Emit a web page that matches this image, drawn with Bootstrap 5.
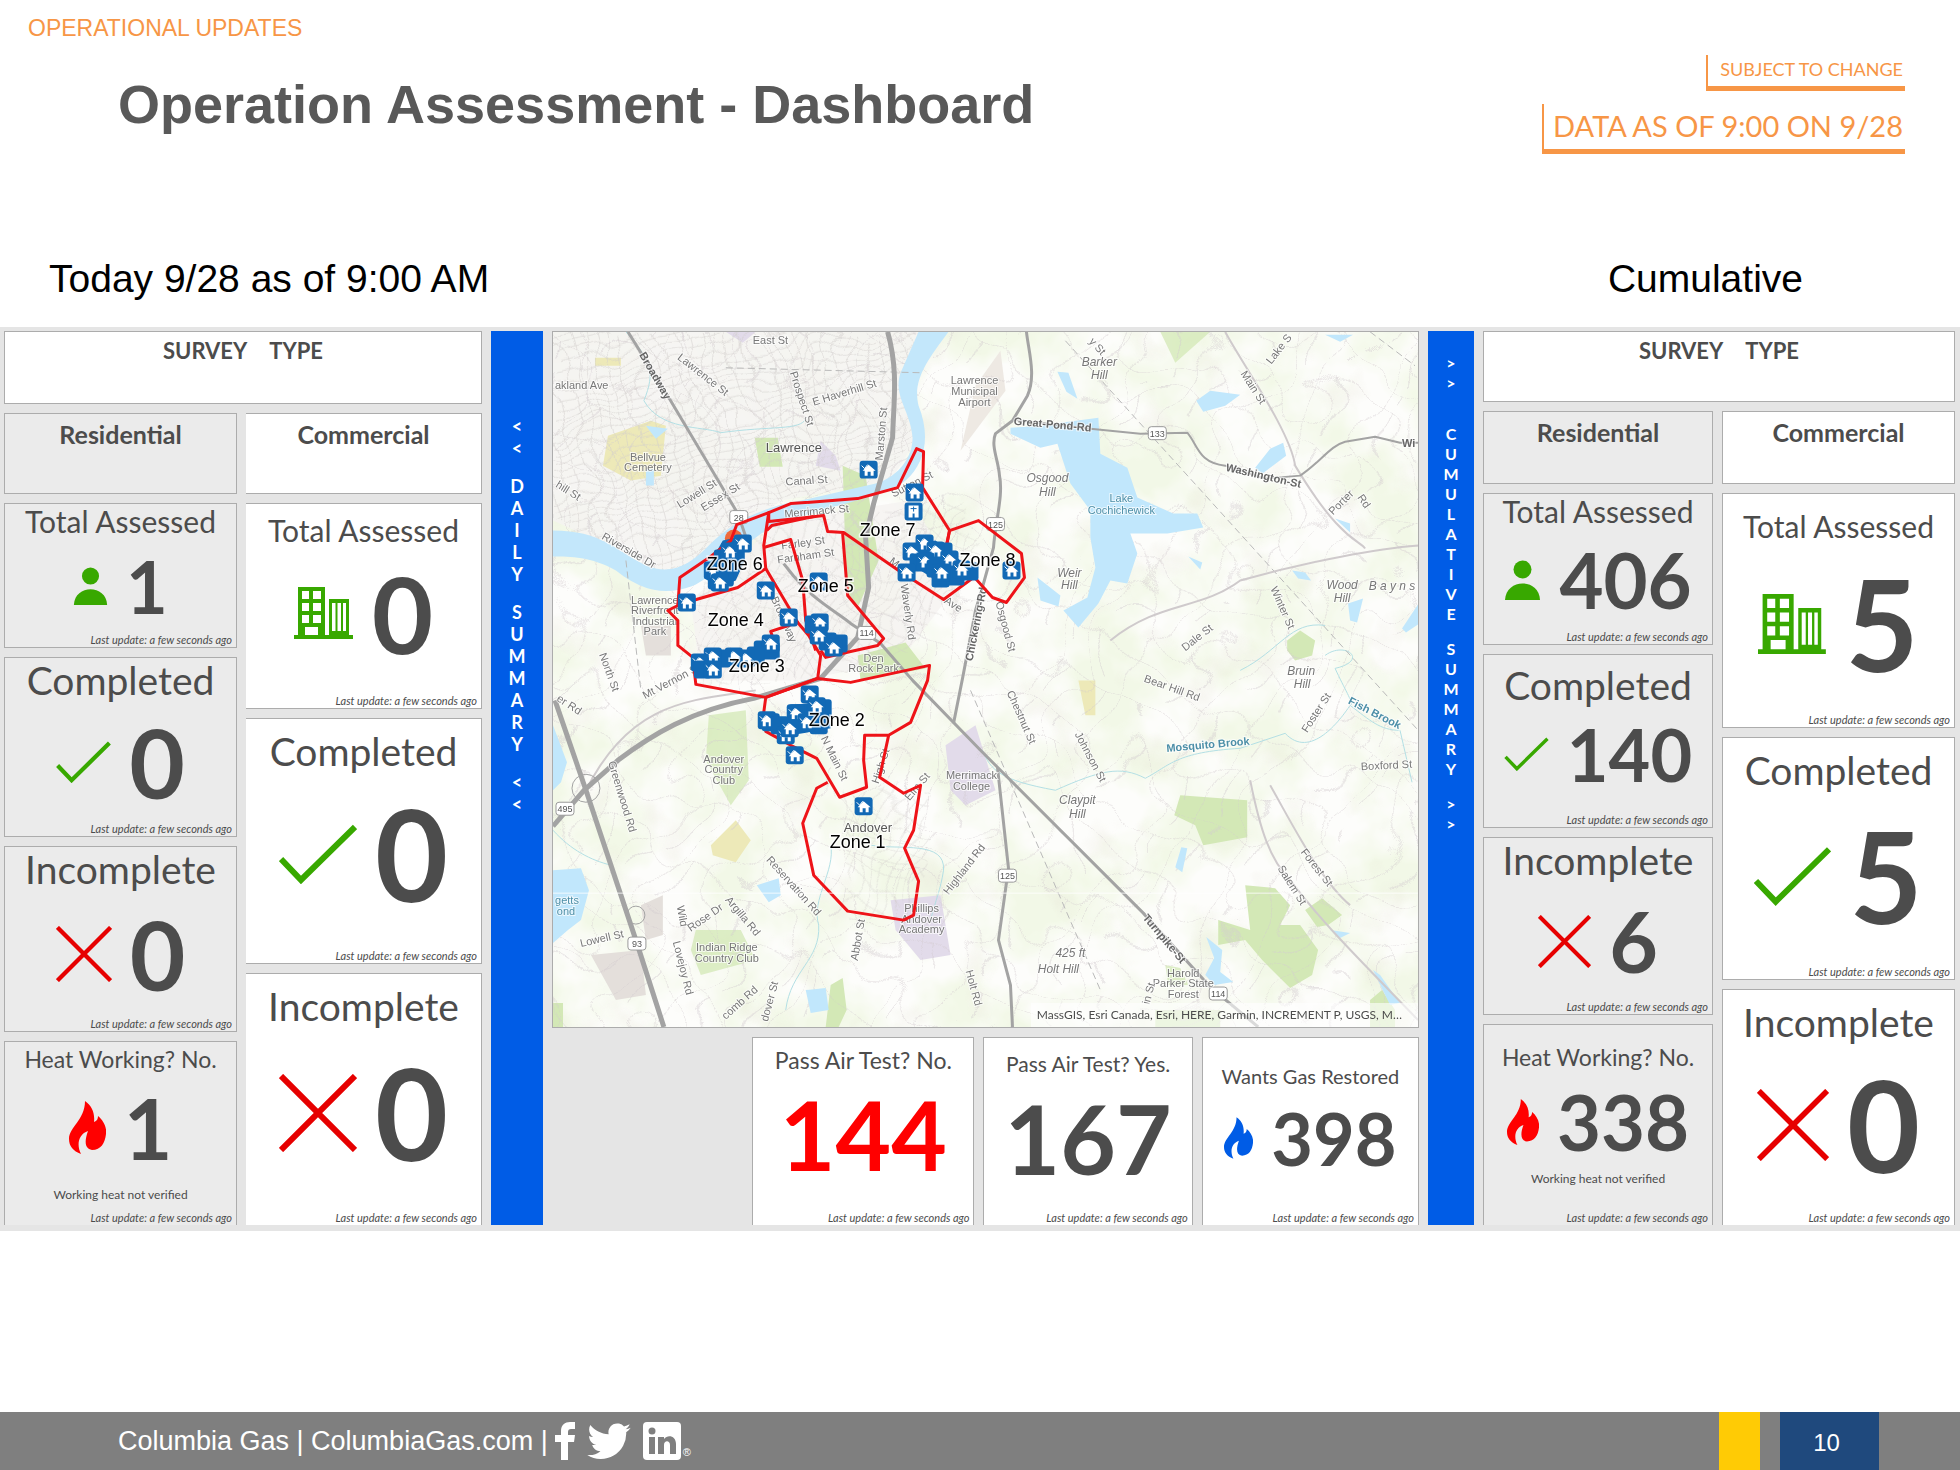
<!DOCTYPE html>
<html lang="en">
<head>
<meta charset="utf-8">
<meta name="viewport" content="width=device-width, initial-scale=1">
<title>Operation Assessment - Dashboard</title>
<link rel="stylesheet" href="https://cdn.jsdelivr.net/npm/bootstrap@5.3.0/dist/css/bootstrap.min.css">
<style>
  body { font-family: "Liberation Sans", Arial, sans-serif; color: #000; background: #fff; }
  .accent { color: #f79646; }
  .eyebrow { font-size: 23px; line-height: 32px; padding: 12px 0 0 28px; }
  .page-title { font-size: 54px; line-height: 64px; font-weight: 700; color: #595959; margin: 28px 0 0 118px; }
  .stamps { padding: 55px 55px 0 0; gap: 13px; font-family: Lato, sans-serif; }
  .stamp { border-left: 2px solid #f79646; border-bottom: 5px solid #f79646; padding-right: 2px; }
  .stamp-sm { font-size: 18px; line-height: 29px; padding-left: 12px; padding-bottom: 2px; }
  .stamp-lg { font-size: 29px; line-height: 43px; padding-left: 9px; padding-bottom: 2px; }
  .period-row { font-size: 39px; line-height: 48px; padding: 101px 157px 24px 49px; }

  .dash { font-family: Lato, sans-serif; color: #4c4c4c; background: #e5e5e5; min-height: 904px;
    padding: 4px 5px 6px 4px; display: grid; gap: 9px; grid-template-columns: 478fr 52fr 867fr 46fr 472fr; }
  .panel, .pair, .stack, .middle, .extras { display: grid; gap: 9px; min-width: 0; min-height: 0; }
  .panel-daily { grid-template-rows: 73fr 81fr 722fr; }
  .panel-total { grid-template-rows: 71fr 73fr 732fr; }
  .panel-daily .pair { grid-template-columns: 233fr 236fr; }
  .panel-total .pair { grid-template-columns: 230fr 233fr; }
  .panel-daily .stack-res { grid-template-rows: 145fr 180fr 185fr 184fr; }
  .panel-daily .stack-com { grid-template-rows: 206fr 247fr 252fr; }
  .panel-total .stack-res { grid-template-rows: 152fr 174fr 178fr 201fr; }
  .panel-total .stack-com { grid-template-rows: 235fr 243fr 236fr; }
  .middle { grid-template-rows: 696fr 188fr; }
  .extras { grid-template-columns: 191fr 222fr 209fr 217fr; }

  .tile { --bs-card-border-color: #acacac; --bs-card-bg: #fff; color: #4c4c4c; min-height: 0; }
  .tile-res { --bs-card-bg: #ebebeb; }
  .panel-daily .tile-com { border-left: 0; }
  .stack .tile:last-child, .extras .tile { border-bottom: 0; }
  .survey { font-size: 22px; line-height: 38px; font-weight: 700; gap: 22px; }
  .cap { text-align: center; white-space: nowrap; margin: 0; font-weight: 400; }
  .cap.kind { font-size: 25px; line-height: 40px; font-weight: 700; }
  .cap-20 { font-size: 20px; }
  .cap-21 { font-size: 21px; }
  .cap-23 { font-size: 23px; }
  .cap-30 { font-size: 30px; }
  .cap-39 { font-size: 39px; }
  .h-35 { line-height: 35px; }
  .h-44 { line-height: 44px; }
  .h-52 { line-height: 52px; }
  .h-64 { line-height: 64px; }
  .h-76 { line-height: 76px; }
  .figure-row { flex: 1 1 0; display: flex; align-items: center; justify-content: center; gap: 18px; min-height: 0; }
  .num { font-weight: 700; line-height: 60px; }
  .n-70 { font-size: 72px; }
  .n-76 { font-size: 76px; }
  .n-84 { font-size: 84px; }
  .n-96 { font-size: 96px; }
  .n-106 { font-size: 106px; }
  .n-126 { font-size: 126px; }
  .stale { font-size: 11px; line-height: 14px; font-style: italic; text-align: right; padding-right: 4px; white-space: nowrap; }
  .remark { font-size: 12px; line-height: 32px; text-align: center; }
  .go { color: #38a800; }
  .stop { color: #e60000; }
  .hot { color: #f00; }
  .gas { color: #005ce6; }

  .rail { background: #005ce6; color: #fff; font-weight: 700; text-align: center; }
  .rail-daily { font-size: 18px; line-height: 22px; padding-top: 84px; gap: 16px; }
  .rail-total { font-size: 16px; line-height: 20px; padding-top: 22px; gap: 15px; }
  .rail-total div:first-child { margin-bottom: 16px; }

  .map-box { position: relative; overflow: hidden; border: 1px solid #acacac; background: #fcfcf8; min-height: 0; }
  .map-box > svg { position: absolute; inset: 0; width: 100%; height: 100%; }
  .credit { position: absolute; right: 0; bottom: 0; padding: 0 16px 0 6px; font-size: 12px; line-height: 24px; background: rgba(255,255,255,.6); }
  .map-box text { font-family: "Liberation Sans", Arial, sans-serif; font-size: 11px; fill: #777; stroke: #fff; stroke-width: 2px; paint-order: stroke; stroke-opacity: .7; }
  .map-box .town { font-size: 13px; fill: #555; }
  .map-box .hill { font-style: italic; font-size: 12px; text-anchor: middle; }
  .map-box .spot { text-anchor: middle; }
  .map-box .wet { fill: #4d8fa8; text-anchor: middle; }
  .map-box .main { font-weight: 700; fill: #666; }
  .map-box .zone { font-size: 18px; fill: #000; stroke-width: 3px; stroke-opacity: .8; }
  .map-box .sign { font-size: 9px; text-anchor: middle; stroke: none; fill: #555; }

  .foot { background: #7f7f7f; color: #fff; height: 58px; }
  .foot-brand { font-size: 27px; padding-left: 118px; }
  .foot-brand a { color: inherit; text-decoration: none; }
  .foot-icons { gap: 12px; padding-left: 7px; }
  .reg { font-size: 11px; line-height: 12px; padding: 22px 0 0 2px; }
  .swatch { width: 41px; background: #ffcb05; margin-right: 20px; }
  .page-no { width: 99px; background: #1f497d; font-size: 24px; margin-right: 81px; padding: 3px 6px 0 0; }
</style>
<script src="https://cdn.jsdelivr.net/npm/bootstrap@5.3.0/dist/js/bootstrap.bundle.min.js"></script>
</head>
<body class="d-flex flex-column min-vh-100">

<svg width="0" height="0" class="position-absolute" aria-hidden="true">
  <symbol id="i-check" viewBox="0 0 78 60"><path d="M2 35 22 56 76 3" fill="none" stroke="currentColor" stroke-width="6"/></symbol>
  <symbol id="i-cross" viewBox="0 0 78 78"><path d="M2 2 76 76M76 2 2 76" fill="none" stroke="currentColor" stroke-width="6"/></symbol>
  <symbol id="i-person" viewBox="0 0 35 40"><g fill="currentColor"><circle cx="17.500" cy="9.500" r="9"/><path d="M0 40C1 18 34 18 35 40z"/></g></symbol>
  <symbol id="i-offices" viewBox="0 0 60 52"><path fill="currentColor" fill-rule="evenodd" d="M4 0H31V48H35V12H55V48H59V52H0V48H4zM8 4V12H15V4zM19 4V12H27V4zM8 16V24H15V16zM19 16V24H27V16zM8 28V36H15V28zM19 28V36H27V28zM11 40V48H24V40zM38 16V44H41.500V16zM43.500 16V44H47V16zM49 16V44H52V16z"/></symbol>
  <symbol id="i-flame" viewBox="0 0 37 53"><path fill="currentColor" d="M16 0C23 5 26 12 25 21C28 20 29 18 29 15C34 19 38 26 37 33C36 42 32 49 23 49C16 48 15 41 19 30C10 33 7 43 12 53C4 50 0 45 0 38C0 26 16 19 16 0Z"/></symbol>
</svg>

<header class="d-flex justify-content-between align-items-start">
  <div>
    <div class="eyebrow accent">OPERATIONAL UPDATES</div>
    <h1 class="page-title">Operation Assessment - Dashboard</h1>
  </div>
  <div class="stamps accent d-flex flex-column align-items-end">
    <div class="stamp stamp-sm">SUBJECT TO CHANGE</div>
    <div class="stamp stamp-lg">DATA AS OF 9:00 ON 9/28</div>
  </div>
</header>
<div class="period-row d-flex justify-content-between"><span>Today 9/28 as of 9:00 AM</span><span>Cumulative</span></div>

<main class="dash">
  <section class="panel panel-daily">
    <div class="card rounded-0 tile"><div class="survey d-flex justify-content-center"><span>SURVEY</span><span>TYPE</span></div></div>
    <div class="pair">
      <div class="card rounded-0 tile tile-res"><h2 class="cap kind">Residential</h2></div>
      <div class="card rounded-0 tile tile-com"><h2 class="cap kind">Commercial</h2></div>
    </div>
    <div class="pair">
      <div class="stack stack-res">
        <div class="card rounded-0 tile tile-res"><h3 class="cap cap-30 h-35">Total Assessed</h3>
          <div class="figure-row"><svg class="go" width="35" height="38"><use href="#i-person"/></svg><span class="num n-70">1</span></div><div class="stale">Last update: a few seconds ago</div></div>
        <div class="card rounded-0 tile tile-res"><h3 class="cap cap-39 h-44">Completed</h3>
          <div class="figure-row"><svg class="go" width="55" height="42"><use href="#i-check"/></svg><span class="num n-96">0</span></div><div class="stale">Last update: a few seconds ago</div></div>
        <div class="card rounded-0 tile tile-res"><h3 class="cap cap-39 h-44">Incomplete</h3>
          <div class="figure-row"><svg class="stop" width="56" height="56"><use href="#i-cross"/></svg><span class="num n-96">0</span></div><div class="stale">Last update: a few seconds ago</div></div>
        <div class="card rounded-0 tile tile-res"><h3 class="cap cap-23 h-35">Heat Working? No.</h3>
          <div class="figure-row"><svg class="hot" width="37" height="53"><use href="#i-flame"/></svg><span class="num n-84">1</span></div><div class="remark">Working heat not verified</div><div class="stale">Last update: a few seconds ago</div></div>
      </div>
      <div class="stack stack-com">
        <div class="card rounded-0 tile tile-com"><h3 class="cap cap-30 h-52">Total Assessed</h3>
          <div class="figure-row pb-4"><svg class="go" width="60" height="52"><use href="#i-offices"/></svg><span class="num n-106">0</span></div><div class="stale">Last update: a few seconds ago</div></div>
        <div class="card rounded-0 tile tile-com"><h3 class="cap cap-39 h-64">Completed</h3>
          <div class="figure-row pb-4"><svg class="go" width="78" height="60"><use href="#i-check"/></svg><span class="num n-126">0</span></div><div class="stale">Last update: a few seconds ago</div></div>
        <div class="card rounded-0 tile tile-com"><h3 class="cap cap-39 h-64">Incomplete</h3>
          <div class="figure-row pb-4"><svg class="stop" width="78" height="78"><use href="#i-cross"/></svg><span class="num n-126">0</span></div><div class="stale">Last update: a few seconds ago</div></div>
      </div>
    </div>
  </section>

  <div class="rail rail-daily d-flex flex-column">
    <div>&lt;<br>&lt;</div><div>D<br>A<br>I<br>L<br>Y</div><div>S<br>U<br>M<br>M<br>A<br>R<br>Y</div><div>&lt;<br>&lt;</div>
  </div>

  <section class="middle">
    <div class="map-box">
      <svg viewBox="552 331 866 696" preserveAspectRatio="xMidYMid slice" role="img" aria-label="Zone map">
        <defs>
          <filter id="land" x="0" y="0" width="100%" height="100%"><feTurbulence type="fractalNoise" baseFrequency=".014" numOctaves="4" seed="8"/><feColorMatrix values="0 0 0 0 .89  0 0 0 0 .94  0 0 0 0 .8  3 0 0 0 -1.050"/></filter>
          <filter id="relief" x="0" y="0" width="100%" height="100%"><feTurbulence type="fractalNoise" baseFrequency=".022" numOctaves="3" seed="21"/><feColorMatrix values="0 0 0 0 .8  0 0 0 0 .78  0 0 0 0 .68  0 3 0 0 -1.700"/></filter>
          <filter id="bend" x="0" y="0" width="100%" height="100%"><feTurbulence type="fractalNoise" baseFrequency=".013" numOctaves="2" seed="5"/><feDisplacementMap in="SourceGraphic" scale="130" xChannelSelector="R" yChannelSelector="G"/></filter>
          <filter id="bend-s" x="0" y="0" width="100%" height="100%"><feTurbulence type="fractalNoise" baseFrequency=".02" numOctaves="2" seed="3"/><feDisplacementMap in="SourceGraphic" scale="40" xChannelSelector="R" yChannelSelector="G"/></filter>
          <pattern id="blocks" width="13" height="9" patternUnits="userSpaceOnUse" patternTransform="rotate(-14)"><path d="M0 0H13M0 0V9" stroke="#d2cecc" fill="none"/></pattern>
          <pattern id="blocks2" width="10" height="15" patternUnits="userSpaceOnUse" patternTransform="rotate(28)"><path d="M0 0H10M0 0V15" stroke="#d2cecc" fill="none"/></pattern>
          <pattern id="lanes" width="58" height="46" patternUnits="userSpaceOnUse" patternTransform="rotate(32)"><path d="M0 0H58M0 0V46M22 0V26" stroke="#d3ccd0" fill="none"/></pattern>
          <g id="pin"><rect x="-9" y="-9" width="18" height="18" rx="3" fill="#1269b5"/><path d="M-7-4-4-1-1-5" stroke="#fff" fill="none"/><path d="M0-5 7 1H5V6H2V2H-1V6H-4V1H-6Z" fill="#fff"/></g>
          <g id="dot"><rect x="-9" y="-9" width="18" height="18" rx="3" fill="#1269b5"/></g>
          <g id="plate"><rect x="-9" y="-7" width="18" height="13" rx="3" fill="#fff" stroke="#999"/></g>
        </defs>
        <rect x="552" y="331" width="866" height="696" fill="#fdfdfb"/>
        <rect x="552" y="331" width="866" height="696" filter="url(#land)"/>
        <rect x="552" y="331" width="866" height="696" filter="url(#relief)" opacity=".35"/>
        <!-- built-up area -->
        <path d="M552 331H925L905 390 915 440 890 480 780 500 700 560 660 570 552 520Z" fill="#f5f3f1" opacity=".85"/>
        <path d="M690 600 780 520 910 500 960 580 900 660 800 680 700 680Z" fill="#f5f3f1" opacity=".8"/>
        <!-- parks, campuses, fields -->
        <g fill="#d3e8b6">
          <path d="M754 437H777L782 466H759ZM842 465 865 475 878 560 858 605 846 595ZM857 655 905 642 925 668 860 680ZM545 1003H562V1027H552ZM825 1027 830 985 842 978 846 1010 838 1027Z"/>
          <path d="M1180 795 1247 800V837L1203 845 1195 825 1174 815ZM1245 885 1275 888 1290 905 1280 925 1300 925 1318 950 1312 975 1290 988 1262 960 1245 940 1218 945V920L1250 930Z"/>
          <path d="M1305 910 1322 898 1342 915 1328 925 1317 927ZM1287 640 1300 630 1315 640 1312 655 1295 660 1287 650ZM1370 1000 1382 990 1395 1010V1027H1370ZM1155 1010H1220V1027H1155Z"/>
          <path d="M708 715 745 710 748 780 730 805 705 760ZM695 930 740 930 755 960 700 975 690 950ZM1165 965 1180 968 1188 985 1168 985ZM1160 331H1210L1175 362Z" opacity=".75"/>
        </g>
        <path d="M607 435 650 420 665 425 660 475 630 480 602 465ZM710 845 735 820 750 840 735 862 712 855ZM1078 680H1095V715H1085ZM594 357H620V365H594Z" fill="#ede9b8"/>
        <path d="M820 440 835 455 840 470 815 465ZM945 745 975 725 995 790 965 805 950 790ZM890 900 940 895 950 955 920 960 895 930ZM725 331H755L742 342Z" fill="#e2dbea"/>
        <path d="M590 955 640 950 645 995 615 1000ZM640 905 662 895V935L645 940ZM640 625H670V655H645Z" fill="#e4dfdb"/>
        <path d="M975 385 1000 350 1005 390 975 430 960 450Z" fill="#eee9e3"/>
        <!-- minor streets -->
        <g filter="url(#bend-s)">
          <path d="M552 331H925L905 390 915 440 890 480 780 500 700 560 660 570 552 520Z" fill="url(#blocks)"/>
          <path d="M690 600 780 520 960 500 990 560 900 660 800 680 700 680ZM830 800 930 780 930 890 850 920Z" fill="url(#blocks2)" opacity=".8"/>
        </g>
        <rect x="482" y="261" width="1006" height="836" fill="url(#lanes)" filter="url(#bend)" opacity=".8"/>
        <!-- water -->
        <path d="M552 530C600 530 615 550 645 565 672 576 690 562 705 548 730 522 760 507 800 500L875 483C900 475 912 455 912 437 910 410 892 395 900 372L918 331H948C925 362 912 380 918 405 930 435 925 462 905 480 880 500 800 510 765 530 735 550 720 570 695 584 665 597 640 590 615 570 590 556 570 556 552 556Z" fill="#c3e7fb"/>
        <g fill="#c1e7fc">
          <path d="M1010 427 1040 425 1098 417 1100 453 1127 467 1137 497 1173 513 1197 513 1203 527 1167 533 1130 533 1137 553 1127 583 1110 580 1098 603 1078 627 1063 610 1087 597 1095 567 1090 537 1090 510 1070 483 1057 443 1040 447 1010 433Z"/>
          <path d="M1196 400 1210 390 1240 394 1225 405 1203 411ZM1057 371 1068 372 1077 398 1066 391ZM1283 442 1286 455 1262 473 1255 467 1270 448ZM1037 577 1060 595 1058 606 1040 600ZM1188 556 1202 562 1200 569ZM1292 570 1305 572 1311 580 1298 578ZM1348 603 1363 598 1357 622 1350 620ZM1418 604 1402 628 1406 632 1418 624ZM1325 334H1353L1340 341ZM1335 518 1350 523V532Z"/>
          <path d="M1206 937 1222 950 1220 972 1233 982 1214 985 1205 975 1214 958ZM1181 847 1187 848 1182 872 1175 867ZM1330 930 1350 933 1340 938ZM1373 970 1380 975 1400 1003 1390 1005ZM552 870 580 868 588 890 580 920 567 930 552 943ZM552 725 566 762 560 782 552 790ZM756 885 778 878 780 895 768 902ZM805 990 825 988 828 1010 810 1013ZM645 425 667 428 655 438ZM645 468H653V485H645Z"/>
        </g>
        <path d="M625 331C650 360 655 370 643 400 660 430 700 425 720 432 770 425 800 430 805 418M982 750C990 770 1000 780 1055 790 1100 770 1120 765 1145 778 1170 765 1175 752 1240 748L1285 733C1310 760 1340 720 1350 705 1370 720 1380 730 1400 730L1412 782M1325 655C1345 640 1370 660 1335 668 1345 690 1355 705 1350 705M1240 670C1280 650 1290 620 1325 625M830 845C835 870 810 900 818 925 820 960 790 970 785 1010M870 845C900 850 945 840 943 870 940 890 935 900 930 920M552 830C570 850 590 860 610 865" fill="none" stroke="#b3dfe4"/>
        <path d="M1065 340 1420 732M625 560 640 690M970 690 1100 990M1370 331 1415 365M725 367 920 372" fill="none" stroke="#b9b9b9" stroke-dasharray="7 4"/>
        <path d="M1225 331C1240 360 1290 430 1295 465 1340 540 1360 540 1365 548M1110 640C1160 600 1200 610 1240 580 1310 560 1380 548 1418 545M1250 780C1260 830 1270 860 1290 880 1320 920 1350 950 1418 1020M1270 785C1290 820 1320 880 1350 905M585 790C630 700 690 700 755 690" fill="none" stroke="#cfcacc" stroke-width="2"/>
        <!-- highways -->
        <g fill="none" stroke="#a3a3a3" stroke-width="3" stroke-linejoin="round">
          <path d="M627 331 668 397 737 513 748 545M783 563C810 600 835 610 850 623L880 643 912 680 980 750 997 767 1143 913 1210 987 1258 1027" stroke-width="3"/>
          <path d="M887 331C898 370 893 400 892 437L873 503 865 537 868 587 857 637 820 678 753 698C690 710 650 735 617 760L583 790 552 826" stroke-width="5"/>
          <path d="M554 700 585 790 635 940 663 1027" stroke-width="5"/>
          <path d="M1026 331C1028 350 1036 375 1027 395L1012 420 995 433C990 445 998 460 999 475 1003 495 995 520 993 547L983 583 975 610 962 678 953 723M997 767 1008 868 998 940 1010 985 1012 1027"/>
          <path d="M1012 419 1090 428 1140 433 1187 432C1198 445 1198 462 1225 465L1265 478 1300 475C1320 462 1330 445 1345 441L1375 436 1400 442H1418" stroke-width="2"/>
          <circle cx="585" cy="788" r="14" stroke-width="1"/><circle cx="635" cy="915" r="9" stroke-width="1"/>
        </g>
        <g><use href="#plate" x="738" y="517"/><use href="#plate" x="1157" y="433"/><use href="#plate" x="995" y="524"/><use href="#plate" x="866" y="633"/><use href="#plate" x="1007" y="876"/><use href="#plate" x="1218" y="994"/><use href="#plate" x="564" y="809"/><use href="#plate" x="636" y="944"/></g>
        <g><text class="sign" x="738" y="520">28</text><text class="sign" x="1157" y="436">133</text><text class="sign" x="995" y="527">125</text><text class="sign" x="866" y="636">114</text><text class="sign" x="1007" y="879">125</text><text class="sign" x="1218" y="997">114</text><text class="sign" x="564" y="812">495</text><text class="sign" x="636" y="947">93</text></g>
        <!-- place names -->
        <text class="town" x="765" y="451">Lawrence</text>
        <text class="town" x="843" y="832">Andover</text>
        <g class="names">
          <text class="spot" x="647" y="460">Bellvue</text><text class="spot" x="647" y="470">Cemetery</text>
          <text class="spot" x="974" y="383">Lawrence</text><text class="spot" x="974" y="394">Municipal</text><text class="spot" x="974" y="405">Airport</text>
          <text class="spot" x="654" y="604">Lawrence</text><text class="spot" x="654" y="614">Riverfront</text><text class="spot" x="654" y="625">Industrial</text><text class="spot" x="654" y="635">Park</text>
          <text class="spot" x="873" y="662">Den</text><text class="spot" x="873" y="672">Rock Park</text>
          <text class="spot" x="723" y="763">Andover</text><text class="spot" x="723" y="773">Country</text><text class="spot" x="723" y="784">Club</text>
          <text class="spot" x="971" y="779">Merrimack</text><text class="spot" x="971" y="790">College</text>
          <text class="spot" x="921" y="912">Phillips</text><text class="spot" x="921" y="923">Andover</text><text class="spot" x="921" y="933">Academy</text>
          <text class="spot" x="726" y="951">Indian Ridge</text><text class="spot" x="726" y="962">Country Club</text>
          <text class="spot" x="1183" y="977">Harold</text><text class="spot" x="1183" y="987">Parker State</text><text class="spot" x="1183" y="998">Forest</text>
          <text class="hill" x="1099" y="365">Barker</text><text class="hill" x="1099" y="378">Hill</text>
          <text class="hill" x="1047" y="481">Osgood</text><text class="hill" x="1047" y="495">Hill</text>
          <text class="hill" x="1069" y="576">Weir</text><text class="hill" x="1069" y="589">Hill</text>
          <text class="hill" x="1342" y="589">Wood</text><text class="hill" x="1342" y="602">Hill</text>
          <text class="hill" x="1392" y="590">B a y n s</text>
          <text class="hill" x="1301" y="675">Bruin</text><text class="hill" x="1302" y="688">Hill</text>
          <text class="hill" x="1077" y="804">Claypit</text><text class="hill" x="1077" y="818">Hill</text>
          <text class="hill" x="1070" y="957">425 ft</text><text class="hill" x="1058" y="973">Holt Hill</text>
          <text class="wet" x="1121" y="501">Lake</text><text class="wet" x="1121" y="513">Cochichewick</text>
          <text class="wet" x="566" y="904">getts</text><text class="wet" x="565" y="915">ond</text>
          <text class="wet" font-weight="700" transform="translate(1208 748) rotate(-5)">Mosquito Brook</text>
          <text class="wet" font-weight="700" transform="translate(1373 716) rotate(27)">Fish Brook</text>
        </g>
        <!-- street names -->
        <text class="main" transform="translate(638 354) rotate(60)">Broadway</text>
        <text class="main" transform="translate(1013 424) rotate(5)">Great-Pond-Rd</text>
        <text class="main" transform="translate(1225 470) rotate(13)">Washington-St</text>
        <text class="main" transform="translate(1142 918) rotate(50)">Turnpike-St</text>
        <text class="main" transform="translate(972 661) rotate(-79)">Chickering-Rd</text>
        <text class="main" x="1402" y="446">Wi</text>
        <text x="554" y="388">akland Ave</text>
        <text x="752" y="343">East St</text>
        <text transform="translate(676 358) rotate(38)">Lawrence St</text>
        <text transform="translate(789 372) rotate(72)">Prospect St</text>
        <text transform="translate(813 405) rotate(-17)">E Haverhill St</text>
        <text transform="translate(882 460) rotate(-85)">Marston St</text>
        <text transform="translate(679 508) rotate(-32)">Lowell St</text>
        <text transform="translate(703 511) rotate(-32)">Essex St</text>
        <text transform="translate(785 485) rotate(-4)">Canal St</text>
        <text transform="translate(784 517) rotate(-5)">Merrimack St</text>
        <text transform="translate(893 497) rotate(-27)">Sutton St</text>
        <text transform="translate(554 486) rotate(32)">hill St</text>
        <text transform="translate(600 538) rotate(30)">Riverside Dr</text>
        <text transform="translate(781 549) rotate(-8)">Farley St</text>
        <text transform="translate(777 563) rotate(-8)">Farnham St</text>
        <text transform="translate(770 598) rotate(66)">Broadway</text>
        <text transform="translate(900 584) rotate(82)">Waverly Rd</text>
        <text transform="translate(888 562) rotate(38)">Mass</text>
        <text transform="translate(943 602) rotate(32)">Ave</text>
        <text transform="translate(995 602) rotate(75)">Osgood St</text>
        <text transform="translate(598 654) rotate(70)">North St</text>
        <text transform="translate(644 699) rotate(-28)">Mt Vernon St</text>
        <text transform="translate(555 700) rotate(33)">er Rd</text>
        <text transform="translate(607 762) rotate(73)">Greenwood Rd</text>
        <text transform="translate(820 738) rotate(64)">N Main St</text>
        <text transform="translate(878 784) rotate(-72)">High St</text>
        <text transform="translate(909 801) rotate(-50)">Elm St</text>
        <text transform="translate(765 860) rotate(48)">Reservation Rd</text>
        <text transform="translate(724 900) rotate(50)">Argilla Rd</text>
        <text transform="translate(676 906) rotate(80)">Wild</text>
        <text transform="translate(690 932) rotate(-35)">Rose Dr</text>
        <text transform="translate(672 942) rotate(76)">Lovejoy Rd</text>
        <text transform="translate(580 947) rotate(-13)">Lowell St</text>
        <text transform="translate(725 1020) rotate(-42)">comb Rd</text>
        <text transform="translate(767 1022) rotate(-75)">dover St</text>
        <text transform="translate(857 961) rotate(-80)">Abbot St</text>
        <text transform="translate(948 895) rotate(-52)">Highland Rd</text>
        <text transform="translate(965 971) rotate(75)">Holt Rd</text>
        <text transform="translate(1006 692) rotate(66)">Chestnut St</text>
        <text transform="translate(1074 734) rotate(62)">Johnson St</text>
        <text transform="translate(1143 681) rotate(20)">Bear Hill Rd</text>
        <text transform="translate(1185 651) rotate(-38)">Dale St</text>
        <text transform="translate(1270 588) rotate(66)">Winter St</text>
        <text transform="translate(1307 733) rotate(-57)">Foster St</text>
        <text transform="translate(1361 770) rotate(-3)">Boxford St</text>
        <text transform="translate(1300 852) rotate(52)">Forest St</text>
        <text transform="translate(1277 868) rotate(58)">Salem St</text>
        <text transform="translate(1240 373) rotate(57)">Main St</text>
        <text transform="translate(1271 364) rotate(-52)">Lake S</text>
        <text transform="translate(1088 341) rotate(48)">y St</text>
        <text transform="translate(1333 515) rotate(-45)">Porter</text>
        <text transform="translate(1357 497) rotate(55)">Rd</text>
        <text transform="translate(1149 1005) rotate(-75)">in St</text>
        <!-- markers -->
        <circle cx="733" cy="538" r="9" fill="#ee6a3c"/>
        <path d="M722 540 744 535V560L735 580 715 588 705 570ZM908 545 935 540 960 560 966 575 945 586 920 570ZM790 705 828 700 830 728 790 735Z" fill="#1269b5"/>
        <g fill="none" stroke="#ee1318" stroke-width="3" stroke-linejoin="round">
          <path d="M768 512 790 503 857 498 897 487 916 448 923 451 922 487 949 530 943 560 973 577 943 599 898 570 843 532 827 531 823 515 768 521Z"/>
          <path d="M949 530 978 520 1021 553 1024 577 1006 602 992 597 975 578 943 560Z"/>
          <path d="M768 512 736 524 730 540 710 556 679 577 677 605 692 600 737 587 765 568 763 545Z"/>
          <path d="M677 605 667 610 677 620V645L692 657 695 684 765 697 817 678 820 655 808 635 797 622 770 631 774 643"/>
          <path d="M765 568 797 622M763 547 790 539 802 580 805 620 815 650M766 530 771 525 813 516M842 533 847 595 883 638 877 645 850 651 825 657 820 650"/>
          <path d="M765 697 817 678 850 682 929 665 927 680 910 722 888 735 864 735 863 760 866 787 839 797 816 758 790 745 765 731 763 712Z"/>
          <path d="M827 782 816 788 802 823 813 875 847 911 903 920 913 915 918 881 904 848 913 830 920 785 903 793 879 777 888 735"/>
        </g>
        <g>
          <use href="#dot" x="722" y="558"/><use href="#dot" x="712" y="570"/><use href="#dot" x="716" y="580"/><use href="#pin" x="729" y="551"/><use href="#pin" x="742" y="543"/><use href="#pin" x="714" y="571"/><use href="#dot" x="724" y="577"/><use href="#pin" x="719" y="582"/>
          <use href="#pin" x="686" y="602"/><use href="#pin" x="765" y="590"/><use href="#pin" x="788" y="617"/><use href="#pin" x="818" y="581"/>
          <use href="#dot" x="813" y="624"/><use href="#pin" x="819" y="622"/><use href="#dot" x="827" y="641"/><use href="#pin" x="818" y="635"/><use href="#dot" x="838" y="643"/><use href="#pin" x="833" y="647"/>
          <use href="#dot" x="762" y="649"/><use href="#dot" x="770" y="650"/><use href="#pin" x="770" y="643"/><use href="#dot" x="755" y="655"/><use href="#pin" x="745" y="658"/><use href="#pin" x="733" y="656"/><use href="#dot" x="721" y="658"/><use href="#pin" x="712" y="656"/><use href="#pin" x="699" y="662"/><use href="#dot" x="702" y="669"/><use href="#pin" x="712" y="669"/>
          <use href="#pin" x="924" y="543"/><use href="#pin" x="911" y="551"/><use href="#dot" x="943" y="551"/><use href="#pin" x="935" y="550"/><use href="#dot" x="918" y="562"/><use href="#pin" x="925" y="561"/><use href="#dot" x="935" y="568"/><use href="#pin" x="906" y="572"/><use href="#dot" x="940" y="578"/><use href="#pin" x="949" y="559"/><use href="#dot" x="955" y="576"/><use href="#dot" x="969" y="571"/><use href="#pin" x="961" y="569"/><use href="#pin" x="941" y="572"/>
          <use href="#pin" x="868" y="469"/><use href="#pin" x="914" y="492"/>
          <g transform="translate(913 511)"><use href="#dot"/><path d="M-5-6H5V6H1V2H-1V6H-5Z" fill="#fff"/><path d="M-3-3H3M0-5V0" stroke="#1269b5"/></g>
          <use href="#pin" x="1011" y="570"/>
          <use href="#pin" x="809" y="694"/><use href="#dot" x="822" y="708"/><use href="#pin" x="816" y="706"/><use href="#dot" x="797" y="713"/><use href="#pin" x="795" y="713"/><use href="#dot" x="818" y="725"/><use href="#pin" x="806" y="722"/><use href="#dot" x="770" y="722"/><use href="#pin" x="766" y="720"/><use href="#dot" x="779" y="725"/><use href="#pin" x="785" y="735"/><use href="#pin" x="789" y="728"/><use href="#pin" x="794" y="755"/><use href="#pin" x="863" y="806"/>
        </g>
        <g><text class="zone" x="706" y="569">Zone 6</text><text class="zone" x="707" y="626">Zone 4</text><text class="zone" x="797" y="592">Zone 5</text><text class="zone" x="859" y="535">Zone 7</text><text class="zone" x="728" y="672">Zone 3</text><text class="zone" x="959" y="565">Zone 8</text><text class="zone" x="808" y="726">Zone 2</text><text class="zone" x="829" y="848">Zone 1</text></g>
        <path d="M552 893H1418" stroke="#fff" stroke-opacity=".8"/>
      </svg>
      <div class="credit">MassGIS, Esri Canada, Esri, HERE, Garmin, INCREMENT P, USGS, M…</div>
    </div>
    <div class="extras">
      <div></div>
      <div class="card rounded-0 tile"><h3 class="cap cap-23 h-44">Pass Air Test? No.</h3>
        <div class="figure-row pb-4"><span class="num n-96 hot">144</span></div><div class="stale">Last update: a few seconds ago</div></div>
      <div class="card rounded-0 tile"><h3 class="cap cap-21 h-52">Pass Air Test? Yes.</h3>
        <div class="figure-row pb-4"><span class="num n-96">167</span></div><div class="stale">Last update: a few seconds ago</div></div>
      <div class="card rounded-0 tile"><h3 class="cap cap-20 h-76">Wants Gas Restored</h3>
        <div class="figure-row pb-5"><svg class="gas" width="29" height="42"><use href="#i-flame"/></svg><span class="num n-70">398</span></div><div class="stale">Last update: a few seconds ago</div></div>
    </div>
  </section>

  <div class="rail rail-total d-flex flex-column">
    <div>&gt;<br>&gt;</div><div>C<br>U<br>M<br>U<br>L<br>A<br>T<br>I<br>V<br>E</div><div>S<br>U<br>M<br>M<br>A<br>R<br>Y</div><div>&gt;<br>&gt;</div>
  </div>

  <section class="panel panel-total">
    <div class="card rounded-0 tile"><div class="survey d-flex justify-content-center"><span>SURVEY</span><span>TYPE</span></div></div>
    <div class="pair">
      <div class="card rounded-0 tile tile-res"><h2 class="cap kind">Residential</h2></div>
      <div class="card rounded-0 tile tile-com"><h2 class="cap kind">Commercial</h2></div>
    </div>
    <div class="pair">
      <div class="stack stack-res">
        <div class="card rounded-0 tile tile-res"><h3 class="cap cap-30 h-35">Total Assessed</h3>
          <div class="figure-row"><svg class="go" width="37" height="40"><use href="#i-person"/></svg><span class="num n-76">406</span></div><div class="stale">Last update: a few seconds ago</div></div>
        <div class="card rounded-0 tile tile-res"><h3 class="cap cap-39 h-52 pt-1">Completed</h3>
          <div class="figure-row pb-3"><svg class="go" width="45" height="34"><use href="#i-check"/></svg><span class="num n-70">140</span></div><div class="stale">Last update: a few seconds ago</div></div>
        <div class="card rounded-0 tile tile-res"><h3 class="cap cap-39 h-44">Incomplete</h3>
          <div class="figure-row"><svg class="stop" width="53" height="53"><use href="#i-cross"/></svg><span class="num n-84">6</span></div><div class="stale">Last update: a few seconds ago</div></div>
        <div class="card rounded-0 tile tile-res"><h3 class="cap cap-23 h-64">Heat Working? No.</h3>
          <div class="figure-row pb-2"><svg class="hot" width="32" height="46"><use href="#i-flame"/></svg><span class="num n-76">338</span></div><div class="remark pb-3">Working heat not verified</div><div class="stale">Last update: a few seconds ago</div></div>
      </div>
      <div class="stack stack-com">
        <div class="card rounded-0 tile tile-com"><h3 class="cap cap-30 h-64">Total Assessed</h3>
          <div class="figure-row pb-4"><svg class="go" width="69" height="60"><use href="#i-offices"/></svg><span class="num n-126">5</span></div><div class="stale">Last update: a few seconds ago</div></div>
        <div class="card rounded-0 tile tile-com"><h3 class="cap cap-39 h-64">Completed</h3>
          <div class="figure-row pb-3"><svg class="go" width="77" height="60"><use href="#i-check"/></svg><span class="num n-126">5</span></div><div class="stale">Last update: a few seconds ago</div></div>
        <div class="card rounded-0 tile tile-com"><h3 class="cap cap-39 h-64">Incomplete</h3>
          <div class="figure-row pb-3"><svg class="stop" width="72" height="72"><use href="#i-cross"/></svg><span class="num n-126">0</span></div><div class="stale">Last update: a few seconds ago</div></div>
      </div>
    </div>
  </section>
</main>

<footer class="foot mt-auto d-flex">
  <div class="foot-brand d-flex align-items-center flex-grow-1">
    <span>Columbia Gas | <a href="#">ColumbiaGas.com</a> |</span>
    <div class="foot-icons d-flex">
      <a href="#" class="d-flex" aria-label="Facebook"><svg width="20" height="38" viewBox="0 0 20 38" fill="#fff"><path d="M6 38V20H0V13H6V9C6 3 10 0 15 0H20V7H16C14 7 13 8 13 10V13H20L19 20H13V38Z"/></svg></a>
      <a href="#" class="d-flex" aria-label="Twitter"><svg width="44" height="38" viewBox="0 0 24 21" fill="#fff"><path d="M24 3.200c-.9.400-1.800.700-2.800.8 1-.6 1.800-1.600 2.200-2.700-1 .6-2 1-3.100 1.200A4.900 4.900 0 0 0 11.800 6.800C7.700 6.600 4.100 4.700 1.700 1.700.4 3.900 1 6.800 3.200 8.300c-.8 0-1.600-.2-2.200-.6 0 2.300 1.600 4.400 3.900 4.900-.7.200-1.500.2-2.200.1.600 2 2.400 3.400 4.600 3.400A9.900 9.900 0 0 1 0 18.200 14 14 0 0 0 21.500 5.700c1-.7 1.800-1.600 2.500-2.500z"/></svg></a>
      <a href="#" class="d-flex" aria-label="LinkedIn"><svg width="38" height="38" viewBox="0 0 38 38"><rect width="38" height="38" rx="4" fill="#fff"/><g fill="#7f7f7f"><circle cx="9" cy="9" r="3.500"/><path d="M6 15H12V32H6ZM15 15H21V17C25 12 33 14 33 22V32H27V23C27 18 21 18 21 23V32H15Z"/></g></svg></a>
    </div>
    <span class="reg">®</span>
  </div>
  <div class="swatch"></div>
  <div class="page-no d-flex align-items-center justify-content-center">10</div>
</footer>
</body>
</html>
